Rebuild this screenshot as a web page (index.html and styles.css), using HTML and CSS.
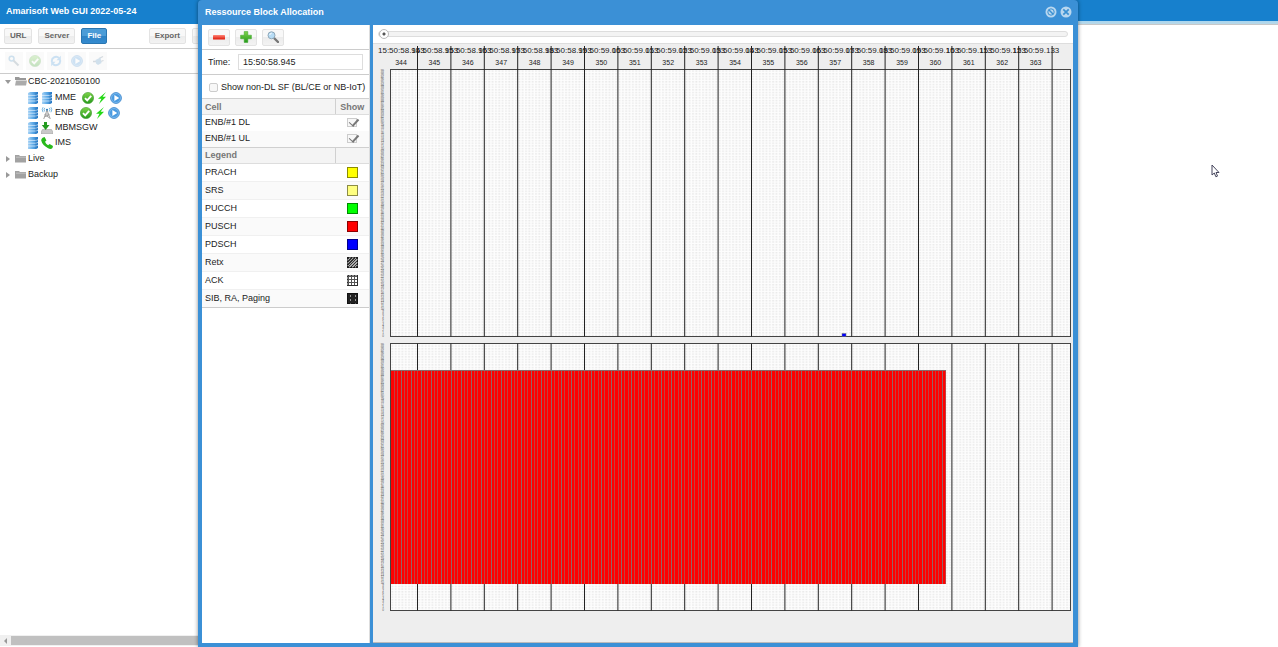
FILE: index.html
```html
<!DOCTYPE html>
<html lang="en">
<head>
<meta charset="utf-8">
<title>Amarisoft Web GUI</title>
<link rel="stylesheet" href="styles.css">
</head>
<body>
<svg class="defs" aria-hidden="true">
  <defs>
    <linearGradient id="g-blue" x2="1" y2="0"><stop offset="0" stop-color="#a6d2f5"/><stop offset=".5" stop-color="#5ba8e6"/><stop offset="1" stop-color="#2577c4"/></linearGradient>
    <linearGradient id="g-green" x2="0" y2="1"><stop offset="0" stop-color="#7ed34a"/><stop offset="1" stop-color="#259a1c"/></linearGradient>
    <linearGradient id="g-red" x2="0" y2="1"><stop offset="0" stop-color="#ff8577"/><stop offset="1" stop-color="#dd1708"/></linearGradient>
    <symbol id="server" viewBox="-1 0 12 12"><path fill="url(#g-blue)" d="M0 1l2-1h8v11l-2 1H0z"/><path fill="none" stroke="#e9f5ff" stroke-width=".7" d="M0 3.400h8l2-.8M0 6.200h8l2-.8M0 9h8l2-.8"/><path fill="none" stroke="#2c74b5" stroke-width=".5" d="M8 1v11"/></symbol>
    <symbol id="folder" viewBox="0 0 12 9"><path fill="#a2a2a2" d="M0 1h4l1 1h6v6.500H0z"/><path stroke="#d8d8d8" stroke-width=".6" d="M1 3.200h10"/></symbol>
    <symbol id="folder-open" viewBox="0 0 12 9"><path fill="#999" d="M0 0h4l1 1h6v2H0z"/><path fill="#ababab" d="M1 3.500h11l-1 5H0z"/></symbol>
    <symbol id="check" viewBox="0 0 12 12"><circle cx="6" cy="6" r="5.600" fill="url(#g-green)" stroke="#3c9b2c" stroke-width=".6"/><path d="M3 6.200l2.200 2.200L9.200 3.800" fill="none" stroke="#fff" stroke-width="1.900"/></symbol>
    <symbol id="bolt" viewBox="0 0 10 12"><path fill="#24d816" d="M9 0L1 6.800h3.400L2 12l7-7.200H5.600z"/></symbol>
    <symbol id="play" viewBox="0 0 12 12"><circle cx="6" cy="6" r="5.400" fill="#7dbcee" stroke="#3d87cd" stroke-width=".9"/><circle cx="6" cy="6" r="4" fill="#4a9ae0"/><path fill="#fff" d="M4.400 2.900L9.200 6 4.400 9.100z"/></symbol>
    <symbol id="antenna" viewBox="0 0 10 11"><path d="M5 3L2 11M5 3l3 8M3.600 6.500h3M2.800 9l4.500-2M2.600 7l4.800 3" fill="none" stroke="#a0a0a0" stroke-width=".9"/><path d="M3 .8q-1.500 1.700 0 3.400M7 .8q1.500 1.700 0 3.400M1.400.2q-1.600 2.300 0 4.600M8.600.2q1.600 2.300 0 4.600" fill="none" stroke="#4d9fd5" stroke-width=".7"/><circle cx="5" cy="2.500" r="1" fill="#347fb8"/></symbol>
    <symbol id="download" viewBox="0 0 12 12"><path d="M1.500 7.500L0 10v2h12v-2l-1.500-2.500z" fill="#c9c9c9" stroke="#999" stroke-width=".5"/><path d="M3 0h3v3h2.500L4.600 8 .8 3H3z" fill="#249b20"/></symbol>
    <symbol id="phone" viewBox="0 0 11 11"><path fill="#29b91b" d="M1.500.6L3.300 0 5 3.200 3.700 4.300q.7 2 2.800 3.200L7.900 6.400 11 8.300l-.5 1.700q-1.500 1.700-4 .3Q1.200 7.500.2 3.200.1 1.600 1.500.6z"/></symbol>
    <symbol id="wrench" viewBox="0 0 12 12"><circle cx="3.600" cy="3.600" r="2.400" fill="none" stroke="#4b94c9" stroke-width="1.500"/><path d="M5.500 5.500l5 5" stroke="#6a8193" stroke-width="2"/></symbol>
    <symbol id="refresh" viewBox="0 0 12 12"><path d="M2 7A4.200 4.200 0 0 1 9 3M10 5a4.200 4.200 0 0 1-7 4" fill="none" stroke="#4399df" stroke-width="2"/><path fill="#4399df" d="M10.800.7v4.500H6.500zM1.200 11.300V6.800h4.300z"/></symbol>
    <symbol id="plug" viewBox="0 0 12 12"><path d="M1 6.500h3M7 3.500l4-2M8.500 6.500l3-1" stroke="#667d91" stroke-width="1.300"/><path fill="#5895c4" d="M3.500 5l5-2.500L9.500 8 6 10 4 8.500z"/></symbol>
    <symbol id="cross" viewBox="0 0 12 12"><path d="M2 1l8 10M10 1L2 11" stroke="#e73b2e" stroke-width="2.500"/></symbol>
    <symbol id="minus" viewBox="0 0 12 12"><rect y="4" width="12" height="4.500" rx=".6" fill="url(#g-red)"/></symbol>
    <symbol id="plus" viewBox="0 0 12 12"><path fill="url(#g-green)" stroke="#31a221" stroke-width=".5" d="M4.200.6h3.600v3.600h3.600v3.600H7.800v3.600H4.200V7.800H.6V4.200h3.600z"/></symbol>
    <symbol id="magnifier" viewBox="0 0 12 12"><path d="M7 7l4 4" stroke="#777" stroke-width="2.400" stroke-linecap="round"/><circle cx="4.500" cy="4.300" r="3.500" fill="#b7dcf5" stroke="#8ea7b8"/><path d="M2.700 4q.3-1.600 2-1.800" fill="none" stroke="#fff"/></symbol>
  </defs>
</svg>

<header class="topbar"><h1>Amarisoft Web GUI 2022-05-24</h1></header>

<aside class="sidebar">
  <div class="bar main-bar">
    <button class="btn">URL</button>
    <button class="btn">Server</button>
    <button class="btn active">File</button>
    <button class="btn push">Export</button>
    <button class="btn" aria-label="Connect"><svg class="ico"><use href="#plug"/></svg></button>
  </div>
  <div class="bar faded">
    <button class="tool" disabled aria-label="Configure"><svg class="ico"><use href="#wrench"/></svg></button>
    <button class="tool" disabled aria-label="Enable"><svg class="ico"><use href="#check"/></svg></button>
    <button class="tool" disabled aria-label="Refresh"><svg class="ico"><use href="#refresh"/></svg></button>
    <button class="tool" disabled aria-label="Play"><svg class="ico"><use href="#play"/></svg></button>
    <button class="tool" disabled aria-label="Plug"><svg class="ico"><use href="#plug"/></svg></button>
    <button class="tool push" disabled aria-label="Remove"><svg class="ico"><use href="#cross"/></svg></button>
  </div>
  <ul class="tree">
    <li>
      <div class="node"><span class="caret open"></span><svg class="ico"><use href="#folder-open"/></svg>CBC-2021050100</div>
      <ul class="children">
        <li class="node"><svg class="ico"><use href="#server"/></svg><svg class="ico"><use href="#server"/></svg><span class="name">MME</span><svg class="ico"><use href="#check"/></svg><svg class="ico"><use href="#bolt"/></svg><svg class="ico"><use href="#play"/></svg></li>
        <li class="node"><svg class="ico"><use href="#server"/></svg><svg class="ico"><use href="#antenna"/></svg><span class="name">ENB</span><svg class="ico"><use href="#check"/></svg><svg class="ico"><use href="#bolt"/></svg><svg class="ico"><use href="#play"/></svg></li>
        <li class="node"><svg class="ico"><use href="#server"/></svg><svg class="ico"><use href="#download"/></svg><span class="name">MBMSGW</span></li>
        <li class="node"><svg class="ico"><use href="#server"/></svg><svg class="ico"><use href="#phone"/></svg><span class="name">IMS</span></li>
      </ul>
    </li>
    <li class="node"><span class="caret"></span><svg class="ico"><use href="#folder"/></svg>Live</li>
    <li class="node"><span class="caret"></span><svg class="ico"><use href="#folder"/></svg>Backup</li>
  </ul>
  <div class="scrollbar"><span class="arrow"></span><span class="thumb"></span></div>
</aside>

<section class="window">
  <header class="titlebar">
    <h2>Ressource Block Allocation</h2>
    <button class="round" aria-label="Maximize"><svg viewBox="0 0 12 12"><circle cx="6" cy="6" r="5.500" fill="#b9d7ef"/><circle cx="6" cy="6" r="3.200" fill="none" stroke="#3b90d2" stroke-width="1"/><path d="M3.800 3.800l4.400 4.400" stroke="#3b90d2" stroke-width="1.500"/></svg></button>
    <button class="round" aria-label="Close"><svg viewBox="0 0 12 12"><circle cx="6" cy="6" r="5.500" fill="#b9d7ef"/><path d="M3.300 3.300l5.400 5.400M8.700 3.300L3.300 8.700" stroke="#3b90d2" stroke-width="1.700"/></svg></button>
  </header>
  <div class="panes">
    <div class="options">
      <div class="bar">
        <button class="btn" aria-label="Zoom out"><svg class="ico"><use href="#minus"/></svg></button>
        <button class="btn" aria-label="Zoom in"><svg class="ico"><use href="#plus"/></svg></button>
        <button class="btn" aria-label="Search"><svg class="ico"><use href="#magnifier"/></svg></button>
      </div>
      <div class="bar time"><label for="time">Time:</label><input id="time" type="text" value="15:50:58.945"></div>
      <label class="bar option"><input type="checkbox">Show non-DL SF (BL/CE or NB-IoT)</label>
      <table class="grid cells">
        <thead><tr><th>Cell</th><th class="mark">Show</th></tr></thead>
        <tbody>
          <tr><td><label for="dl">ENB/#1 DL</label></td><td class="mark"><input id="dl" type="checkbox" checked></td></tr>
          <tr><td><label for="ul">ENB/#1 UL</label></td><td class="mark"><input id="ul" type="checkbox" checked></td></tr>
        </tbody>
      </table>
      <table class="grid legend">
        <thead><tr><th>Legend</th><th class="mark"></th></tr></thead>
        <tbody>
          <tr><td>PRACH</td><td class="mark"><span class="swatch prach"></span></td></tr>
          <tr><td>SRS</td><td class="mark"><span class="swatch srs"></span></td></tr>
          <tr><td>PUCCH</td><td class="mark"><span class="swatch pucch"></span></td></tr>
          <tr><td>PUSCH</td><td class="mark"><span class="swatch pusch"></span></td></tr>
          <tr><td>PDSCH</td><td class="mark"><span class="swatch pdsch"></span></td></tr>
          <tr><td>Retx</td><td class="mark"><span class="swatch retx"></span></td></tr>
          <tr><td>ACK</td><td class="mark"><span class="swatch ack"></span></td></tr>
          <tr><td>SIB, RA, Paging</td><td class="mark"><span class="swatch sib"></span></td></tr>
        </tbody>
      </table>
    </div>
    <div class="view">
      <div class="slider"><input type="range" min="0" max="100" value="0" aria-label="Position"></div>
      <svg class="chart" id="chart" role="img" aria-label="Resource blocks per subframe"></svg>
    </div>
  </div>
</section>

<svg class="cursor" viewBox="0 0 9 14" aria-hidden="true"><path d="M1 1v10l2.300-2 1.600 3.800 1.600-.7L5 8.500h3z" fill="#fff" stroke="#45455c"/></svg>
<script src="chart.js"></script>
</body>
</html>
```
FILE: styles.css
```css
* { box-sizing: border-box; }
body {
  margin: 0;
  height: 100vh;
  display: flex;
  flex-direction: column;
  overflow: hidden;
  position: relative;
  background: #fff;
  color: #222;
  font: 9px/15px "Liberation Sans", Arial, sans-serif;
}
h1, h2 { margin: 0; font-size: 9px; line-height: 23px; color: #fff; }
ul { list-style: none; margin: 0; padding: 0; }
button, input { font: inherit; color: inherit; margin: 0; padding: 0; }
.defs { position: absolute; width: 0; height: 0; }
.ico { width: 12px; height: 12px; flex: none; display: block; }

.topbar {
  flex: none;
  height: 25px;
  padding-left: 6px;
  background: linear-gradient(#1780cd 21px, #a9d5ee 21px, #b8d8e8 24px, #c8c8c8 24px);
}

.sidebar {
  width: 220px;
  margin-top: -1px;
  flex: 1;
  min-height: 0;
  display: flex;
  flex-direction: column;
  background: #fff;
  box-shadow: 0 -4px #1780cd;
}
.bar {
  display: flex;
  align-items: center;
  flex: none;
  height: 25px;
  padding: 0 4px;
  gap: 5px;
  border-bottom: 1px solid #ccc;
}
.push { margin-left: auto; }
.btn {
  height: 16px;
  padding: 0 5px;
  border: 1px solid #e3e3e3;
  border-radius: 2px;
  background: linear-gradient(#f8f8f8 50%, #ececec 50%, #f3f3f3);
  font-size: 8px;
  font-weight: bold;
  line-height: 14px;
  color: #666;
}
.main-bar { gap: 6px; }
.btn.active { background: linear-gradient(#4b9cd7 50%, #2e82c5 50%, #348bcf); border-color: #2a76b1; color: #fff; }
.faded { padding-left: 5px; gap: 3px; }
.tool { width: 18px; height: 18px; border: 0; background: #fafafa; padding: 3px; }
.tool .ico { opacity: .25; }

.tree { flex: 1; display: flex; flex-direction: column; gap: 1px; }
.node { display: flex; align-items: center; height: 15px; padding-left: 5px; gap: 1px; }
.node .caret + .ico { height: 9px; margin-left: 1px; }
.children { padding: 1px 0 0 22px; }
.children .node { gap: 2px; }
.children .name { padding-right: 4px; }
.caret { width: 8px; flex: none; }
.caret::before { content: ""; display: block; width: 0; border: 3px solid transparent; border-left: 4px solid #999; border-right: 0; margin-left: 1px; }
.caret.open::before { border: 3px solid transparent; border-top: 4px solid #999; border-bottom: 0; margin-left: 0; }
.scrollbar { display: flex; align-items: center; height: 11px; padding: 1px 0 1px 4px; margin-bottom: 1px; gap: 4px; background: #f0f0f0; }
.arrow { border: 3px solid transparent; border-right: 3px solid #999; border-left: 0; }
.thumb { flex: 1; height: 9px; background: #c0c0c0; }

.window {
  position: absolute;
  inset: 0 200px 0 198px;
  display: flex;
  flex-direction: column;
  padding: 0 5px 4px 4px;
  background: #3b90d6;
  border-radius: 4px 4px 0 0;
  box-shadow: 0 0 4px rgba(0, 0, 0, .45);
}
.titlebar { display: flex; align-items: center; gap: 3px; height: 25px; flex: none; padding: 0 1px 1px 3px; }
.titlebar h2 { flex: 1; }
.round { width: 12px; height: 12px; border: 0; background: none; }
.round svg { display: block; }
.panes { flex: 1; min-height: 0; display: grid; grid-template-columns: 168px 1fr; gap: 3px; }
.options { background: #fff; border-right: 1px solid #ddd; }
.options .btn { width: 22px; height: 17px; padding: 0 4px; }
.options .bar { padding: 0 6px; }
.time label { width: 25px; }
.time input { flex: 1; min-width: 0; height: 16px; padding: 0 4px; border: 1px solid #ddd; }
.options .option { height: 24px; gap: 3px; padding: 0 7px; border: 0; white-space: nowrap; }
input[type="checkbox"] { appearance: none; width: 9px; height: 9px; flex: none; border: 1px solid #ccc; border-radius: 2px; background: #f7f7f7; }
.mark input[type="checkbox"] { display: block; margin: 0 auto; border-radius: 0; width: 10px; }
.mark input:checked::after { content: ""; display: block; width: 4px; height: 8px; margin: -2px 0 0 3px; border: solid #777; border-width: 0 2px 1px 0; transform: rotate(42deg); }
.grid { width: 167px; border-collapse: collapse; table-layout: fixed; }
.grid th, .grid td { height: 16px; padding: 0 0 0 3px; line-height: 14px; text-align: left; }
.grid th { background: #f4f4f4; border-top: 1px solid #d0d0d0; border-bottom: 1px solid #ddd; color: #777; }
.grid th + th { border-left: 1px solid #d0d0d0; }
.grid .mark { width: 34px; padding: 0; text-align: center; }
.grid tr:nth-child(even) td { background: #fafafa; }
.cells td { padding-bottom: 1px; }
.cells { border-top: 1px solid #d0d0d0; margin-top: -1px; }
.legend { border-bottom: 1px solid #ccc; }
.legend td { height: 18px; border-top: 1px solid #f0f0f0; }
.swatch { display: block; width: 11px; height: 11px; margin: 0 auto; border: 1px solid rgba(0, 0, 0, .45); }
.prach { background: #ff0; }
.srs { background: #ffff80; }
.pucch { background: #0f0; }
.pusch { background: #f00; }
.pdsch { background: #00f; }
.retx { background: repeating-linear-gradient(135deg, #333 0 1px, #aaa 1px 2px); }
.ack { background: repeating-linear-gradient(#555 0 1px, transparent 1px 3px), repeating-linear-gradient(90deg, #555 0 1px, #fff 1px 3px); }
.sib { background: radial-gradient(circle, #999 0 1px, transparent 1px) 0 0 / 5px 4px, #222; }

.view { min-width: 0; display: flex; flex-direction: column; background: #eee; border-bottom: 1px solid #bbb; }
.slider { height: 19px; padding: 3px 5px; background: #fff; border-bottom: 1px solid #ddd; }
.slider input { appearance: none; display: block; width: 100%; height: 12px; background: none; }
.slider input::-webkit-slider-runnable-track { height: 6px; border: 1px solid #ddd; border-radius: 3px; background: #f3f3f3; }
.slider input::-webkit-slider-thumb { appearance: none; width: 10px; height: 10px; margin-top: -3px; border: 1px solid #bbb; border-radius: 50%; background: radial-gradient(circle, #555 0 1px, #fff 2px); }
.chart { flex: 1; width: 100%; min-height: 0; display: block; }
.chart text { fill: #222; }
.chart .stamp { font-size: 8px; }
.chart .frame-no { font-size: 7px; text-anchor: middle; }
.chart .rb { font-size: 3px; text-anchor: end; fill: #555; }
.chart .plot { stroke: #444; stroke-width: 1; }
.chart .tick { stroke: #222; stroke-width: 1; }

.cursor { position: absolute; left: 1211px; top: 164px; width: 9px; height: 14px; }
```
FILE: chart.js
```js
const svg = document.getElementById("chart");
const NS = "http://www.w3.org/2000/svg";

const PITCH = 33.4;      // width of one frame
const LEFT = 17.5;       // left edge of the plots
const FIRST_TICK = 44.5;
const PLOT_HEIGHT = 267;
const RB_COUNT = 100;
const RB = PLOT_HEIGHT / RB_COUNT;
const PLOTS = [25.5, 299.5];

function add(tag, attrs, text, parent = svg) {
  const el = document.createElementNS(NS, tag);
  for (const key in attrs) el.setAttribute(key, attrs[key]);
  if (text !== undefined) el.textContent = text;
  parent.appendChild(el);
  return el;
}

function draw() {
  svg.replaceChildren();
  const right = svg.clientWidth - 2.5;
  const pattern = add("pattern", { id: "cell", width: PITCH / 10, height: RB, x: LEFT, y: PLOTS[0], patternUnits: "userSpaceOnUse" });
  add("rect", { width: 4, height: 3, fill: "#fdfdfd" }, undefined, pattern);
  add("rect", { x: 1, y: 1, width: 1.8, height: 1.3, fill: "#e8e8e8" }, undefined, pattern);

  for (const top of PLOTS) {
    add("rect", { class: "plot", x: LEFT, y: top, width: right - LEFT, height: PLOT_HEIGHT, fill: "url(#cell)" });
    for (let i = 0; i < RB_COUNT; i++) {
      add("text", { class: "rb", x: 11, y: top + PLOT_HEIGHT - i * RB }, i);
    }
  }

  for (let i = 0; FIRST_TICK + i * PITCH < right; i++) {
    const x = FIRST_TICK + i * PITCH;
    add("line", { class: "tick", x1: x, x2: x, y1: 2, y2: PLOTS[0] + PLOT_HEIGHT });
    add("line", { class: "tick", x1: x, x2: x, y1: PLOTS[1], y2: PLOTS[1] + PLOT_HEIGHT });
    const ms = 58943 + i * 10;
    const stamp = "15:50:" + (ms / 1000).toFixed(3);
    add("text", { class: "stamp", x: 5 + i * PITCH, y: 9 }, stamp);
    add("text", { class: "frame-no", x: 28 + i * PITCH, y: 21 }, 344 + i);
  }

  // PUSCH allocation: one block per subframe
  const y = Math.floor(PLOTS[1] + 10 * RB);
  const height = Math.round(80 * RB);
  const count = 166;
  add("rect", { x: 18, y, width: 555, height, fill: "#f00" });
  for (let i = 1; i <= count; i++) {
    add("rect", { x: Math.round(LEFT + i * PITCH / 10), y, width: 1, height, fill: i % 3 ? "#c04040" : "#946464" });
  }
  add("rect", { x: 18, y, width: 555, height: 1, fill: "#8a6a6a" });

  // PDSCH block
  add("rect", { x: 469, y: PLOTS[0] + PLOT_HEIGHT - 3, width: 4, height: 3, fill: "#00f", stroke: "#777", "stroke-width": 0.5 });
}

draw();
window.addEventListener("resize", draw);
```
